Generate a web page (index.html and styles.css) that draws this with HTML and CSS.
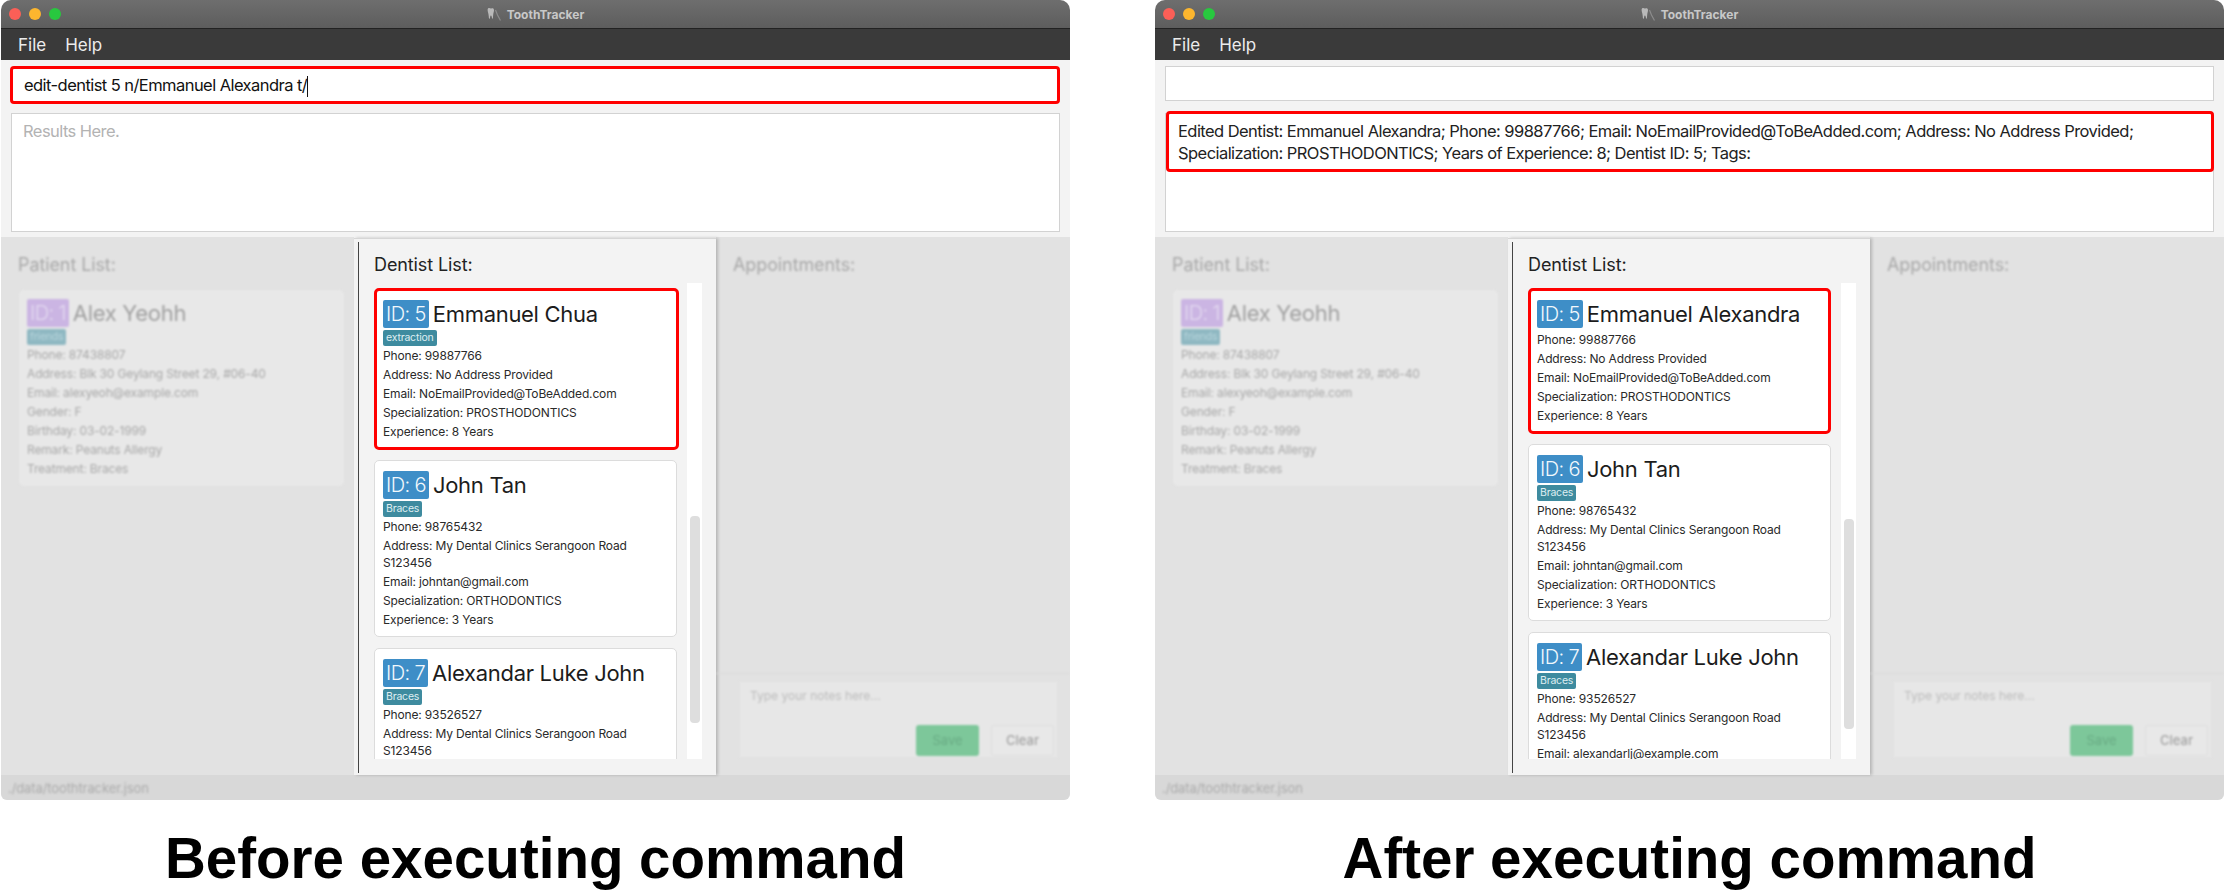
FILE: index.html
```html
<!DOCTYPE html>
<html lang="en">
<head>
    <meta charset="UTF-8">
    <title>ToothTracker edit-dentist</title>
    <link rel="stylesheet" href="styles.css">
</head>
<body>
    <div class="shot">
        <div class="window">
            <div class="titlebar">
                <div class="lights"><span class="light red"></span><span class="light yellow"></span><span class="light green"></span></div>
                <div class="app-title">
                    <svg class="tooth" viewBox="0 0 14 14"><path d="M1 1.5c1-.8 2-.3 2.800 0s1.700-.5 2.500 0c1 .7.800 2.500.300 4-.4 1.300-.4 3-.7 5.500-.1 1-.8 1-1-.2-.2-1-.3-2.300-1-2.300s-.7 1.800-1 2.800c-.3.800-.9.600-1-.3-.1-2.500-.4-3.800-.8-5.300C.7 4 .3 2.300 1 1.500z" fill="#b9b9b9"/><path d="M8.500 3l2 5 3 5.500" stroke="#8c8c8c" stroke-width="1.200" fill="none"/></svg>
                    <span>ToothTracker</span>
                </div>
            </div>
            <div class="menubar"><span>File</span><span>Help</span></div>
            <div class="command-pane">
                <div class="command-box marked">edit-dentist 5 n/Emmanuel Alexandra t/<span class="caret"></span></div>
            </div>
            <div class="result-pane">
                <div class="result-box"><span class="placeholder">Results Here.</span></div>
            </div>
            <div class="panels">
                <section class="side-panel">
                    <div class="blurred">
                        <h2 class="panel-title">Patient List:</h2>
                        <div class="patient-card">
                            <div class="card-head"><span class="badge purple">ID: 1</span><span class="name">Alex Yeohh</span></div>
                            <div class="tags"><span class="tag pale">friends</span></div>
                            <p>Phone: 87438807</p>
                            <p>Address: Blk 30 Geylang Street 29, #06-40</p>
                            <p>Email: alexyeoh@example.com</p>
                            <p>Gender: F</p>
                            <p>Birthday: 03-02-1999</p>
                            <p>Remark: Peanuts Allergy</p>
                            <p>Treatment: Braces</p>
                        </div>
                    </div>
                </section>
                <section class="dentist-panel">
                    <div class="dentist-inner">
                        <h2 class="panel-title">Dentist List:</h2>
                        <div class="dentist-list">
                            <div class="cards">
                                <div class="card card-marked card-wider">
                                    <div class="card-head"><span class="badge">ID: 5</span><span class="name">Emmanuel Chua</span></div>
                                    <div class="tags"><span class="tag">extraction</span></div>
                                    <p>Phone: 99887766</p>
                                    <p>Address: No Address Provided</p>
                                    <p>Email: NoEmailProvided@ToBeAdded.com</p>
                                    <p>Specialization: PROSTHODONTICS</p>
                                    <p>Experience: 8 Years</p>
                                </div>
                                <div class="card">
                                    <div class="card-head"><span class="badge">ID: 6</span><span class="name">John Tan</span></div>
                                    <div class="tags"><span class="tag">Braces</span></div>
                                    <p>Phone: 98765432</p>
                                    <p>Address: My Dental Clinics Serangoon Road<br>S123456</p>
                                    <p>Email: johntan@gmail.com</p>
                                    <p>Specialization: ORTHODONTICS</p>
                                    <p>Experience: 3 Years</p>
                                </div>
                                <div class="card">
                                    <div class="card-head"><span class="badge">ID: 7</span><span class="name">Alexandar Luke John</span></div>
                                    <div class="tags"><span class="tag">Braces</span></div>
                                    <p>Phone: 93526527</p>
                                    <p>Address: My Dental Clinics Serangoon Road<br>S123456</p>
                                </div>
                            </div>
                            <div class="track"><div class="thumb thumb-before"></div></div>
                        </div>
                    </div>
                </section>
                <section class="side-panel appointments">
                    <div class="blurred appt-fill">
                        <h2 class="panel-title">Appointments:</h2>
                        <div class="notes-area">
                            <div class="notes-box">
                                <span class="notes-hint">Type your notes here...</span>
                                <div class="notes-buttons"><span class="btn btn-save">Save</span><span class="btn btn-clear">Clear</span></div>
                            </div>
                        </div>
                    </div>
                </section>
            </div>
            <div class="statusbar"><span class="blurred">./data/toothtracker.json</span></div>
        </div>
        <div class="caption">Before executing command</div>
    </div>

    <div class="shot shot-after">
        <div class="window">
            <div class="titlebar">
                <div class="lights"><span class="light red"></span><span class="light yellow"></span><span class="light green"></span></div>
                <div class="app-title">
                    <svg class="tooth" viewBox="0 0 14 14"><path d="M1 1.5c1-.8 2-.3 2.800 0s1.700-.5 2.500 0c1 .7.800 2.500.300 4-.4 1.300-.4 3-.7 5.500-.1 1-.8 1-1-.2-.2-1-.3-2.300-1-2.300s-.7 1.800-1 2.800c-.3.800-.9.600-1-.3-.1-2.500-.4-3.800-.8-5.300C.7 4 .3 2.300 1 1.500z" fill="#b9b9b9"/><path d="M8.500 3l2 5 3 5.500" stroke="#8c8c8c" stroke-width="1.200" fill="none"/></svg>
                    <span>ToothTracker</span>
                </div>
            </div>
            <div class="menubar"><span>File</span><span>Help</span></div>
            <div class="command-pane">
                <div class="command-box"></div>
            </div>
            <div class="result-pane">
                <div class="result-box">
                    <div class="result-marked">Edited Dentist: Emmanuel Alexandra; Phone: 99887766; Email: NoEmailProvided@ToBeAdded.com; Address: No Address Provided;<br>Specialization: PROSTHODONTICS; Years of Experience: 8; Dentist ID: 5; Tags:</div>
                </div>
            </div>
            <div class="panels">
                <section class="side-panel">
                    <div class="blurred">
                        <h2 class="panel-title">Patient List:</h2>
                        <div class="patient-card">
                            <div class="card-head"><span class="badge purple">ID: 1</span><span class="name">Alex Yeohh</span></div>
                            <div class="tags"><span class="tag pale">friends</span></div>
                            <p>Phone: 87438807</p>
                            <p>Address: Blk 30 Geylang Street 29, #06-40</p>
                            <p>Email: alexyeoh@example.com</p>
                            <p>Gender: F</p>
                            <p>Birthday: 03-02-1999</p>
                            <p>Remark: Peanuts Allergy</p>
                            <p>Treatment: Braces</p>
                        </div>
                    </div>
                </section>
                <section class="dentist-panel">
                    <div class="dentist-inner">
                        <h2 class="panel-title">Dentist List:</h2>
                        <div class="dentist-list">
                            <div class="cards">
                                <div class="card card-marked">
                                    <div class="card-head"><span class="badge">ID: 5</span><span class="name">Emmanuel Alexandra</span></div>
                                    <p>Phone: 99887766</p>
                                    <p>Address: No Address Provided</p>
                                    <p>Email: NoEmailProvided@ToBeAdded.com</p>
                                    <p>Specialization: PROSTHODONTICS</p>
                                    <p>Experience: 8 Years</p>
                                </div>
                                <div class="card">
                                    <div class="card-head"><span class="badge">ID: 6</span><span class="name">John Tan</span></div>
                                    <div class="tags"><span class="tag">Braces</span></div>
                                    <p>Phone: 98765432</p>
                                    <p>Address: My Dental Clinics Serangoon Road<br>S123456</p>
                                    <p>Email: johntan@gmail.com</p>
                                    <p>Specialization: ORTHODONTICS</p>
                                    <p>Experience: 3 Years</p>
                                </div>
                                <div class="card">
                                    <div class="card-head"><span class="badge">ID: 7</span><span class="name">Alexandar Luke John</span></div>
                                    <div class="tags"><span class="tag">Braces</span></div>
                                    <p>Phone: 93526527</p>
                                    <p>Address: My Dental Clinics Serangoon Road<br>S123456</p>
                                    <p>Email: alexandarlj@example.com</p>
                                </div>
                            </div>
                            <div class="track"><div class="thumb thumb-after"></div></div>
                        </div>
                    </div>
                </section>
                <section class="side-panel appointments">
                    <div class="blurred appt-fill">
                        <h2 class="panel-title">Appointments:</h2>
                        <div class="notes-area">
                            <div class="notes-box">
                                <span class="notes-hint">Type your notes here...</span>
                                <div class="notes-buttons"><span class="btn btn-save">Save</span><span class="btn btn-clear">Clear</span></div>
                            </div>
                        </div>
                    </div>
                </section>
            </div>
            <div class="statusbar"><span class="blurred">./data/toothtracker.json</span></div>
        </div>
        <div class="caption">After executing command</div>
    </div>
</body>
</html>
```

FILE: styles.css
```css
/* General Reset */
* {
    margin: 0;
    padding: 0;
    box-sizing: border-box;
}

body {
    width: 2224px;
    height: 891px;
    overflow: hidden;
    display: flex;
    gap: 85px;
    padding-left: 1px;
    background-color: #fff;
    font-family: Inter, "Liberation Sans", sans-serif;
    color: #222;
}

.shot {
    width: 1069px;
}

/* Window frame */
.window {
    height: 800px;
    display: flex;
    flex-direction: column;
    background-color: #f3f3f3;
    border-radius: 10px 10px 6px 6px;
    overflow: hidden;
}

.titlebar {
    height: 29px;
    flex: none;
    display: flex;
    align-items: center;
    justify-content: center;
    position: relative;
    background: linear-gradient(#6e6e6e, #5d5d5d);
    border-bottom: 1px solid #222;
}

.lights {
    position: absolute;
    left: 8px;
    top: 8px;
    display: flex;
    gap: 8px;
}

.light {
    width: 12px;
    height: 12px;
    border-radius: 50%;
}

.red { background-color: #fb5f57; }
.yellow { background-color: #fcb62e; }
.green { background-color: #28c83f; }

.app-title {
    display: flex;
    align-items: center;
    gap: 6px;
    font-size: 12px;
    font-weight: 700;
    color: #c8c8c8;
}

.tooth {
    width: 14px;
    height: 14px;
}

.menubar {
    height: 31px;
    flex: none;
    display: flex;
    align-items: center;
    gap: 19px;
    padding-left: 17px;
    background-color: #3a3a3a;
    color: #ececec;
    font-size: 17px;
}

/* Command and result boxes */
.command-pane {
    height: 48px;
    flex: none;
    padding: 6px 10px 7px 10px;
}

.command-box {
    height: 35px;
    background-color: #fff;
    border: 1px solid #d2d2d2;
    padding-left: 11px;
    font-size: 16.5px;
    letter-spacing: -0.56px;
    line-height: 33px;
    color: #111;
}

.command-box.marked {
    height: 38px;
    margin: 0 0 -3px -1px;
    border: 3px solid #f00;
    border-radius: 4px;
    line-height: 32px;
}

.caret {
    display: inline-block;
    width: 1px;
    height: 21px;
    background-color: #111;
    vertical-align: middle;
}

.result-pane {
    height: 129px;
    flex: none;
    padding: 5px 10px 5px 10px;
}

.result-box {
    height: 119px;
    background-color: #fff;
    border: 1px solid #d2d2d2;
    font-size: 16.5px;
    letter-spacing: -0.56px;
    line-height: 22px;
    position: relative;
}

.placeholder {
    display: block;
    padding: 6px 0 0 11px;
    color: #b3b3b3;
}

.result-marked {
    position: absolute;
    left: 0;
    right: -1px;
    top: -3px;
    height: 61px;
    padding: 6px 0 0 9px;
    border: 3px solid #f00;
    border-radius: 4px;
    color: #222;
}

/* Three list panels */
.panels {
    flex: 1;
    display: grid;
    grid-template-columns: 353px 362px 1fr;
    min-height: 0;
}

.side-panel {
    background-color: #e2e2e2;
    overflow: hidden;
    color: #a8a8a8;
}

.blurred {
    display: block;
    filter: blur(1.2px);
}

.side-panel .blurred {
    padding: 0 10px 0 17px;
}

.panel-title {
    font-size: 18px;
    font-weight: 400;
    letter-spacing: -0.1px;
    line-height: 22px;
    padding-top: 17px;
}

.dentist-panel {
    margin-top: 1px;
    padding: 3px 0 2px 4px;
    background-color: #f3f3f3;
    border-top: 1px solid #d6d6d6;
    box-shadow: 2px 0 3px rgba(0, 0, 0, 0.2);
    position: relative;
}

.dentist-inner {
    height: 100%;
    padding: 0 13px 0 15px;
    border-left: 1px solid #444;
}

.dentist-inner .panel-title {
    padding-top: 12px;
    padding-bottom: 7px;
}

.dentist-list {
    height: 476px;
    display: flex;
    gap: 10px;
    overflow: hidden;
}

.cards {
    width: 303px;
    padding-top: 5px;
}

.track {
    width: 15px;
    background-color: #fff;
    padding: 0 2px 0 3px;
}

.thumb {
    width: 10px;
    background-color: #dedede;
    border-radius: 4px;
}

.thumb-before {
    margin-top: 233px;
    height: 207px;
}

.thumb-after {
    margin-top: 236px;
    height: 210px;
}

/* Person cards */
.card {
    background-color: #fff;
    border: 1px solid #dcdcdc;
    border-radius: 5px;
    padding: 10px 8px 7px 8px;
    margin-bottom: 11px;
}

.card-marked {
    border: 3px solid #f00;
    padding: 9px 6px 6px 6px;
    margin-bottom: 10px;
}

.card-wider {
    margin-right: -2px;
}

.patient-card {
    margin: 14px 0 0 1px;
    height: 196px;
    background-color: #e8e8e8;
    border-radius: 5px;
    padding: 9px 8px;
}

.card-head {
    display: flex;
    align-items: center;
    gap: 4px;
    height: 28px;
}

.card-head + p {
    margin-top: 2px;
}

.badge {
    height: 28px;
    padding: 0 3px;
    background-color: #3e8ec7;
    border-radius: 2px;
    color: #f2f8fc;
    font-size: 20px;
    font-weight: 300;
    letter-spacing: -0.6px;
    line-height: 28px;
}

.badge.purple {
    background-color: #cbb5e3;
    color: #e4daf0;
}

.name {
    font-size: 22px;
    letter-spacing: -0.3px;
    line-height: 28px;
    color: #1c1c1c;
}

.patient-card .name {
    color: #a0a0a0;
}

.tags {
    display: flex;
    margin-top: 2px;
    height: 16px;
}

.tag {
    height: 16px;
    padding: 0 3px;
    background-color: #3e8b9f;
    border-radius: 2px;
    color: #dfeef2;
    font-size: 10.5px;
    letter-spacing: -0.2px;
    line-height: 16px;
}

.tag.pale {
    background-color: #8fb8c2;
    color: #b9d6dd;
}

.card p,
.patient-card p {
    font-size: 12px;
    letter-spacing: -0.15px;
    line-height: 17px;
    padding: 1px 0;
    color: #2a2a2a;
}

.patient-card p {
    color: #a8a8a8;
}

/* Appointment notes */
.appt-fill {
    height: 100%;
    display: flex;
    flex-direction: column;
}

.side-panel .appt-fill {
    padding: 0;
}

.appt-fill .panel-title {
    padding-left: 17px;
}

.notes-area {
    margin-top: auto;
    height: 102px;
    padding: 7px 12px 18px 23px;
    border-top: 1px solid #dcdcdc;
}

.notes-box {
    height: 77px;
    background-color: #e7e7e7;
    border: 1px solid #e2e2e2;
    padding: 6px 10px;
    font-size: 12px;
    color: #bcbcbc;
    position: relative;
}

.notes-buttons {
    position: absolute;
    right: 3px;
    bottom: 1px;
    display: flex;
    gap: 12px;
}

.btn {
    width: 63px;
    height: 31px;
    border-radius: 3px;
    text-align: center;
    line-height: 31px;
    font-size: 13px;
}

.btn-save {
    background-color: #7dc79a;
    color: #69ab84;
}

.btn-clear {
    background-color: #e8e8e8;
    border: 1px solid #dedede;
    line-height: 29px;
    font-weight: 500;
    color: #a2a2a2;
}

.statusbar {
    height: 25px;
    flex: none;
    background-color: #d8d8d8;
    padding: 5px 0 0 7px;
    font-size: 13px;
    letter-spacing: -0.1px;
    color: #ababab;
}

/* Captions under each window */
.caption {
    margin-top: 29px;
    text-align: center;
    font-family: "Liberation Sans", Arial, sans-serif;
    font-size: 56.5px;
    font-weight: 700;
    line-height: 60px;
    color: #000;
}
```
